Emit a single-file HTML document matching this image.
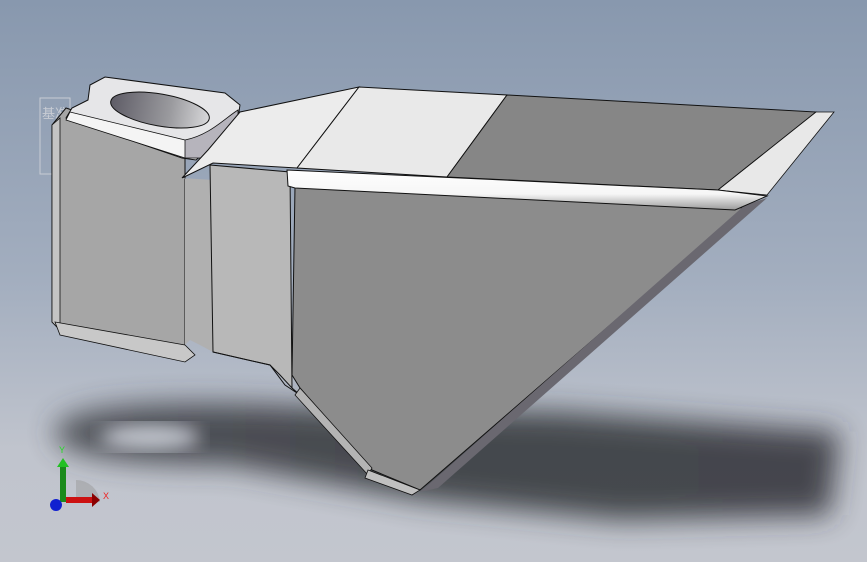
<!DOCTYPE html>
<html><head><style>
html,body{margin:0;padding:0;width:867px;height:562px;overflow:hidden}
body{background:linear-gradient(#8898ae 0%,#a3aebf 50%,#c0c4cd 80%,#c3c6ce 100%)}
svg{position:absolute;left:0;top:0}
</style></head><body>
<svg width="867" height="562" viewBox="0 0 867 562">
<defs>
<filter id="b" x="-20%" y="-50%" width="140%" height="200%"><feGaussianBlur stdDeviation="14"/></filter>
<filter id="b2"><feGaussianBlur stdDeviation="9"/></filter>
<linearGradient id="ring" x1="0" y1="0" x2="1" y2="0"><stop offset="0" stop-color="#5e5c66"/><stop offset=".6" stop-color="#9a9a9e"/><stop offset="1" stop-color="#d8d8da"/></linearGradient>
<linearGradient id="rim" x1="0" y1="0" x2="0" y2="1"><stop offset="0" stop-color="#ffffff"/><stop offset=".6" stop-color="#f6f6f6"/><stop offset="1" stop-color="#9a9a9a"/></linearGradient>
<linearGradient id="sh" x1="0" y1="0" x2="1" y2="0"><stop offset="0" stop-color="#3a3c42"/><stop offset=".4" stop-color="#2c2e33"/><stop offset="1" stop-color="#2a2c31"/></linearGradient>
</defs>
<!-- shadow -->
<g opacity=".82">
<path d="M55 430 C65 400 200 400 330 408 L560 412 L840 432 L830 515 L620 520 L420 500 L230 465 C120 465 50 455 55 430Z" fill="url(#sh)" filter="url(#b)"/>
<ellipse cx="150" cy="437" rx="50" ry="13" fill="#c2c6ce" filter="url(#b2)"/>
</g>
<!-- datum label -->
<rect x="40" y="98" width="30" height="76" fill="none" stroke="#c8ccd4" stroke-width="1"/>
<text x="42" y="118" font-family="Noto Sans CJK SC,sans-serif" font-size="13" fill="#c8ccd4">基准</text>
<!-- left box -->
<path d="M52 125 L66 108 L185 148 L185 350 L60 330 L52 322Z" fill="#a6a6a6" stroke="#111" stroke-width="1"/>
<path d="M52 125 L60 118 L60 330 L52 322Z" fill="#c4c4c4" stroke="#111" stroke-width=".8"/>
<path d="M55 322 L185 345 L195 355 L185 362 L60 335Z" fill="#c8c8c8" stroke="#111" stroke-width=".8"/>
<!-- lug top -->
<path d="M90 85 L105 77 L225 93 L240 105 L238 118 L208 150 L196 160 L182 158 L66 118 L72 108 L88 100Z" fill="#e6e6e8" stroke="#111" stroke-width="1"/>
<ellipse cx="160" cy="110" rx="50" ry="16" fill="url(#ring)" stroke="#111" stroke-width="1" transform="rotate(10 160 110)"/>
<path d="M70 112 L185 140 L200 155 L185 158 L66 120Z" fill="#f4f4f4" stroke="#111" stroke-width=".8"/>
<path d="M185 140 C210 135 225 118 238 110 L238 118 L205 158 L185 158Z" fill="#b6b4bc" stroke="#111" stroke-width=".8"/>
<!-- mid neck top -->
<path d="M182 178 L208 150 L240 112 L359 87 L297 168 L213 163Z" fill="#ececec" stroke="#111" stroke-width="1"/>
<!-- hopper top -->
<path d="M297 168 L359 87 L507 95 L447 177Z" fill="#e9e9e9" stroke="#111" stroke-width="1"/>
<path d="M447 177 L507 95 L816 112 L718 190Z" fill="#868686" stroke="#111" stroke-width="1"/>
<path d="M718 190 L816 112 L834 112 L767 195Z" fill="#e8e8e8" stroke="#111" stroke-width=".8"/>
<!-- mid neck front -->
<path d="M182 178 L213 180 L213 352 L200 345 L190 340 L185 345 L185 178Z" fill="#b0b0b0"/>
<path d="M210 165 L290 172 L292 388 L280 375 L270 365 L213 352Z" fill="#b8b8b8" stroke="#111" stroke-width="1"/>
<path d="M213 352 L270 365 L285 385 L300 395 L292 388" fill="none" stroke="#111"/>
<!-- big face -->
<path d="M295 186 L745 208 L420 490 L372 470 L300 388 L292 375Z" fill="#8c8c8c" stroke="#111" stroke-width="1"/>
<path d="M745 205 L767 198 L438 488 L420 492Z" fill="#6a6870"/>
<path d="M300 388 L372 468 L368 475 L295 395Z" fill="#b4b4b4" stroke="#111" stroke-width=".8"/>
<path d="M368 470 L420 490 L412 495 L365 478Z" fill="#c0c0c0" stroke="#111" stroke-width=".8"/>
<!-- rim -->
<path d="M287 170 L718 190 L767 196 L735 210 L295 188 L288 186Z" fill="url(#rim)" stroke="#111" stroke-width="1"/>
<!-- triad -->
<path d="M76 480 A24 24 0 0 1 100 502 L76 502Z" fill="#999" opacity=".5"/>
<path d="M60 466 L66 466 L66 502 L60 502Z" fill="#1b8a1b"/>
<path d="M63 458 L69 467 L57 467Z" fill="#22c022"/>
<path d="M66 497 L92 497 L92 503 L66 503Z" fill="#cc1111"/>
<path d="M92 493 L100 500 L92 507Z" fill="#8b0000"/>
<circle cx="56" cy="505" r="6" fill="#1020d0"/>
<text x="59" y="453" font-family="Liberation Sans,sans-serif" font-size="9" fill="#22dd22">Y</text>
<text x="103" y="499" font-family="Liberation Sans,sans-serif" font-size="9" fill="#ee2222">X</text>
</svg>
</body></html>
